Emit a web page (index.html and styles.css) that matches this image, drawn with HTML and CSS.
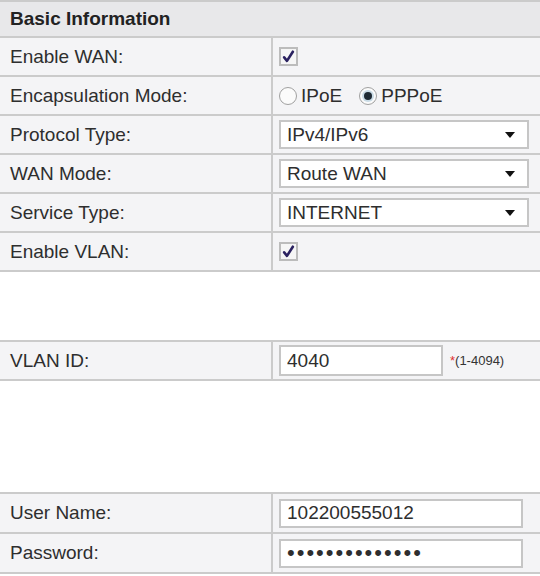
FILE: index.html
```html
<!DOCTYPE html>
<html lang="en">
<head>
    <meta charset="UTF-8">
    <title>WAN Configuration</title>
    <link rel="stylesheet" href="styles.css">
</head>
<body>
    <div class="panel">
        <div class="panel-head">Basic Information</div>
        <div class="row">
            <div class="label">Enable WAN:</div>
            <div class="value"><span class="check checked"><svg viewBox="0 0 12 12" width="13" height="13"><path d="M2 6.8 L4.6 10 L10 1.6" fill="none" stroke="#2a2160" stroke-width="2.4" stroke-linecap="round" stroke-linejoin="round"/></svg></span></div>
        </div>
        <div class="row">
            <div class="label">Encapsulation Mode:</div>
            <div class="value">
                <label class="radio-item"><span class="radio"></span>IPoE</label>
                <label class="radio-item"><span class="radio on"></span>PPPoE</label>
            </div>
        </div>
        <div class="row">
            <div class="label">Protocol Type:</div>
            <div class="value"><div class="select">IPv4/IPv6</div></div>
        </div>
        <div class="row">
            <div class="label">WAN Mode:</div>
            <div class="value"><div class="select">Route WAN</div></div>
        </div>
        <div class="row">
            <div class="label">Service Type:</div>
            <div class="value"><div class="select">INTERNET</div></div>
        </div>
        <div class="row">
            <div class="label">Enable VLAN:</div>
            <div class="value"><span class="check checked"><svg viewBox="0 0 12 12" width="13" height="13"><path d="M2 6.8 L4.6 10 L10 1.6" fill="none" stroke="#2a2160" stroke-width="2.4" stroke-linecap="round" stroke-linejoin="round"/></svg></span></div>
        </div>
    </div>

    <div class="panel vlan">
        <div class="row">
            <div class="label">VLAN ID:</div>
            <div class="value">
                <input class="text short" type="text" value="4040">
                <span class="hint"><span class="req">*</span>(1-4094)</span>
            </div>
        </div>
    </div>

    <div class="panel account">
        <div class="row tall">
            <div class="label">User Name:</div>
            <div class="value"><input class="text" type="text" value="102200555012"></div>
        </div>
        <div class="row tall">
            <div class="label">Password:</div>
            <div class="value"><input class="text pass" type="password" value="xxxxxxxxxxxxxx"></div>
        </div>
    </div>
</body>
</html>
```

FILE: styles.css
```css
body {
    margin: 0;
    font-family: "Liberation Sans", Arial, sans-serif;
    font-size: 19px;
    color: #2e2e2e;
    background: #fff;
    width: 540px;
}
.panel {
    border-top: 2px solid #cbcbcb;
}
.panel-head {
    height: 34px;
    line-height: 34px;
    padding-left: 10px;
    font-weight: bold;
    color: #222;
    background: #e8e8ea;
    border-bottom: 2px solid #cbcbcb;
}
.row {
    display: flex;
    height: 37px;
    background: #f4f4f6;
    border-bottom: 2px solid #cbcbcb;
}
.row.tall {
    height: 38px;
}
.label {
    width: 261px;
    padding-left: 10px;
    line-height: 37px;
    border-right: 2px solid #cbcbcb;
}
.value {
    flex: 1;
    display: flex;
    align-items: center;
    padding-left: 6px;
}
.check {
    width: 15px;
    height: 15px;
    border: 2px solid #bcbcbc;
    background: #f6f6f6;
    display: flex;
    align-items: center;
    justify-content: center;
}
.radio-item {
    display: flex;
    align-items: center;
    margin-right: 17px;
}
.radio {
    width: 16px;
    height: 16px;
    border: 1px solid #a0a0a0;
    border-radius: 50%;
    background: #fbfbfb;
    margin-right: 4px;
    position: relative;
}
.radio.on::after {
    content: "";
    position: absolute;
    left: 4px;
    top: 4px;
    width: 8px;
    height: 8px;
    border-radius: 50%;
    background: #1e2a33;
    box-shadow: 0 0 0 2px #c9dbe6;
}
.select {
    width: 240px;
    height: 25px;
    line-height: 25px;
    border: 2px solid #c6c6c6;
    background: #fff;
    padding-left: 6px;
    position: relative;
}
.select::after {
    content: "";
    position: absolute;
    right: 12px;
    top: 10px;
    border-left: 5px solid transparent;
    border-right: 5px solid transparent;
    border-top: 6px solid #111;
}
.vlan {
    margin-top: 68px;
}
.account {
    margin-top: 111px;
}
.text {
    box-sizing: border-box;
    width: 244px;
    height: 29px;
    border: 2px solid #c6c6c6;
    background: #fff;
    padding: 0 6px;
    font-family: "Liberation Sans", Arial, sans-serif;
    font-size: 19px;
    color: #2e2e2e;
    outline: none;
}
.text.short {
    width: 164px;
    height: 31px;
}
.text.pass {
    font-size: 22px;
    letter-spacing: 2px;
}
.hint {
    font-size: 13px;
    margin-left: 7px;
    color: #333;
}
.req {
    color: #e03030;
}
```
